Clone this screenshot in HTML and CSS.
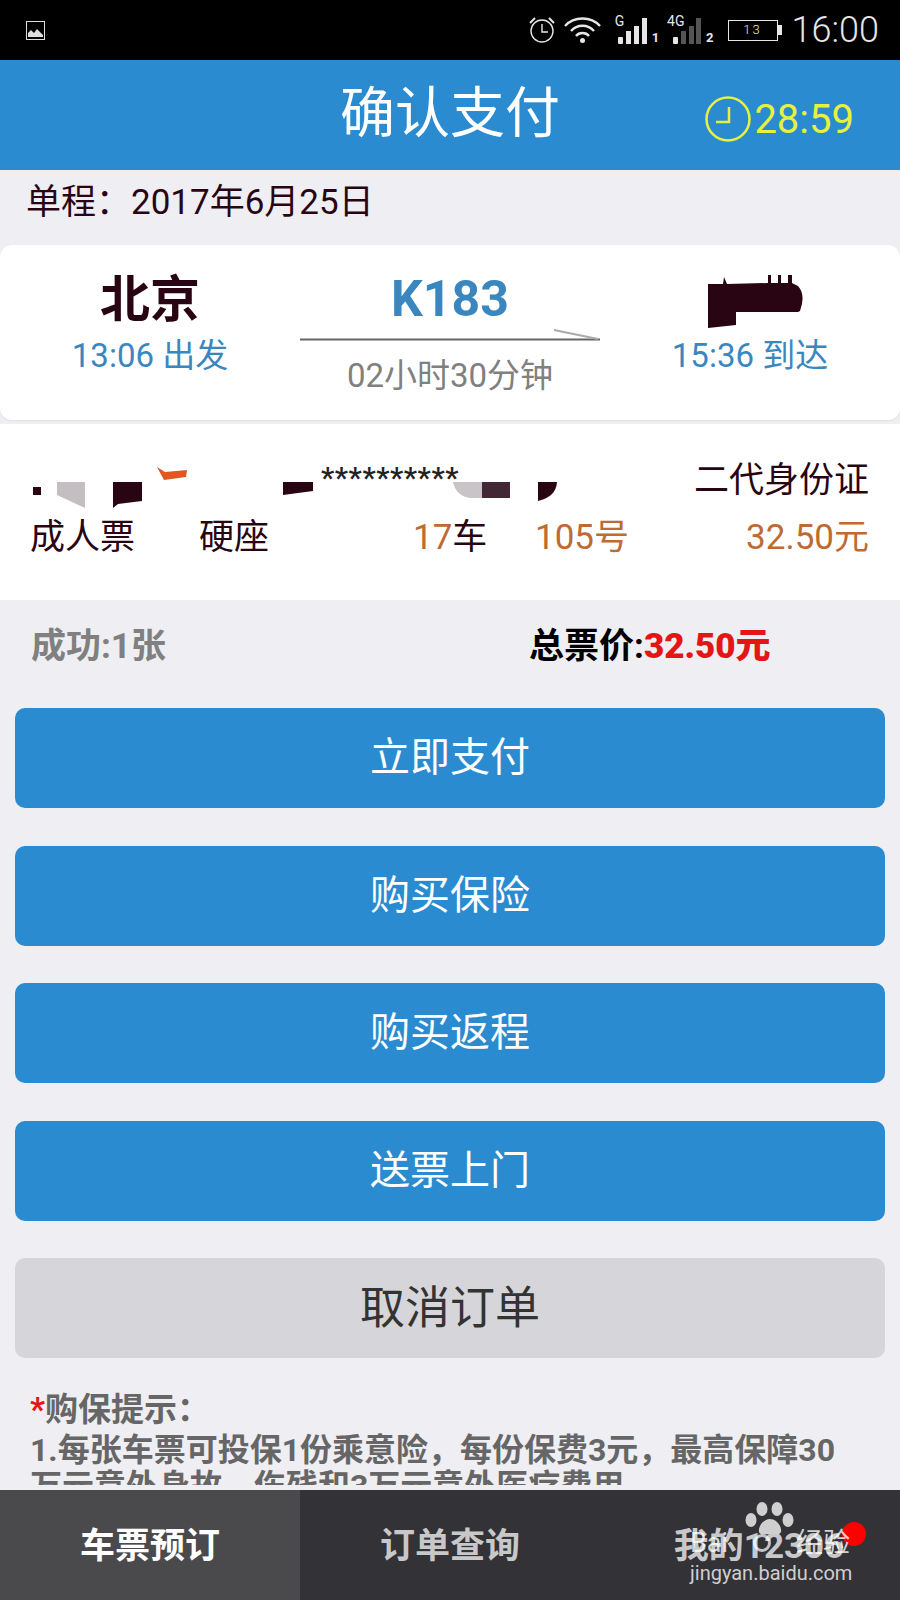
FILE: index.html
```html
<!DOCTYPE html>
<html lang="zh-CN">
<head>
    <meta charset="UTF-8">
    <meta name="viewport" content="width=device-width, initial-scale=1.0">
    <title>确认支付</title>
    <link rel="stylesheet" href="styles.css">
</head>
<body>
    <div class="statusbar">
        <svg class="pic-icon" width="19" height="19" viewBox="0 0 19 19">
            <rect x="0.5" y="0.5" width="18" height="18" fill="none" stroke="#ddd"/>
            <path d="M2 15 L2 12 L5 9 L8 12 L11 8 L17 14 L17 16 L2 16 Z" fill="#ddd"/>
        </svg>
        <div class="status-right">
            <svg width="26" height="26" viewBox="0 0 26 26" fill="none" stroke="#e6e6e6" stroke-width="1.4">
                <circle cx="13" cy="14" r="11"/>
                <path d="M13 7 V15 H19"/>
                <path d="M1 6 L6 1 M25 6 L20 1" stroke-width="2"/>
            </svg>
            <svg class="wifi" width="37" height="26" viewBox="0 0 37 26" fill="none" stroke="#e6e6e6" stroke-width="2.4">
                <path d="M1 9 C10 -1 27 -1 36 9"/>
                <path d="M7 14 C13 7 24 7 30 14"/>
                <path d="M12 19 C15 15 22 15 25 19"/>
                <circle cx="18.500" cy="23.500" r="2.500" fill="#e6e6e6" stroke="none"/>
            </svg>
            <div class="sim">
                <span class="sim-tag">G</span>
                <svg width="32" height="27" viewBox="0 0 32 27" fill="#e6e6e6">
                    <rect x="3" y="20" width="5" height="7" rx="1"/>
                    <rect x="11" y="14" width="5" height="13"/>
                    <rect x="19" y="9" width="5" height="18"/>
                    <rect x="27" y="1" width="5" height="26"/>
                </svg>
                <span class="sim-num">1</span>
            </div>
            <div class="sim sim-two">
                <span class="sim-tag">4G</span>
                <svg width="28" height="27" viewBox="0 0 28 27">
                    <rect x="0" y="20" width="5" height="7" rx="1" fill="#e6e6e6"/>
                    <rect x="8" y="14" width="5" height="13" fill="#555"/>
                    <rect x="16" y="9" width="5" height="18" fill="#555"/>
                    <rect x="23" y="1" width="5" height="26" fill="#555"/>
                </svg>
                <span class="sim-num">2</span>
            </div>
            <div class="battery">
                <span class="battery-body">13</span>
                <span class="battery-tip"></span>
            </div>
            <span class="clock-text">16:00</span>
        </div>
    </div>

    <header class="header">
        <span></span>
        <h1>确认支付</h1>
        <div class="timer">
            <svg width="46" height="46" viewBox="0 0 46 46" fill="none" stroke="#e6f13f" stroke-width="2.500">
                <circle cx="23" cy="23" r="21.500"/>
                <path d="M24 11 V26 H11"/>
            </svg>
            <span>28:59</span>
        </div>
    </header>

    <div class="trip-date">单程：2017年6月25日</div>

    <section class="train-card">
        <div class="station">
            <div class="city">北京</div>
            <div class="station-time">13:06 出发</div>
        </div>
        <div class="train-mid">
            <div class="train-no">K183</div>
            <svg class="train-line" width="300" height="12" viewBox="0 0 300 12" fill="none" stroke="#666">
                <path d="M0 10.500 H300" stroke-width="2"/>
                <path d="M254 1 L298 10" stroke="#aaa" stroke-width="2"/>
            </svg>
            <div class="train-dur">02小时30分钟</div>
        </div>
        <div class="station">
            <svg class="city-mask" width="98" height="53" viewBox="0 0 98 53">
                <path d="M0 9 L15 9 L16 2 L19 9 L60 8 L60 0 H63 V8 H70 V0 H73 V8 H80 V0 H84 V8 L90 11 Q98 20 92 36 L90 37 H28 V50 L0 53 Z" fill="#290513"/>
            </svg>
            <div class="station-time">15:36 到达</div>
        </div>
    </section>

    <section class="passenger">
        <div class="passenger-top">
            <svg class="name-mask" width="600" height="51" viewBox="0 -7 600 51">
                <text class="stars" x="321" y="21">**********</text>
                <rect x="33" y="20" width="8" height="8" fill="#290513"/>
                <path d="M57 15 H85 V41 L57 28 Z" fill="#c4bec2"/>
                <path d="M113 15 H142 V34 L118 37 L113 41 Z" fill="#290513"/>
                <path d="M157 0 L165 5 L187 3 L186 10 L164 13 Z" fill="#e2561f"/>
                <path d="M283 15 H313 V24 L283 28 Z" fill="#290513"/>
                <path d="M453 15 H482 V31 H470 Q456 29 453 15 Z" fill="#c8c4c8"/>
                <rect x="482" y="15" width="28" height="16" fill="#422835"/>
                <path d="M538 15 H557 Q556 30 538 34 Z" fill="#290513"/>
            </svg>
            <span class="id-type">二代身份证</span>
        </div>
        <div class="passenger-row">
            <span>成人票</span>
            <span>硬座</span>
            <span><em>17</em>车</span>
            <span><em>105号</em></span>
            <span class="fare">32.50元</span>
        </div>
    </section>

    <div class="summary">
        <span class="count">成功:1张</span>
        <span class="total">总票价:<b>32.50元</b></span>
    </div>

    <div class="actions">
        <button class="btn">立即支付</button>
        <button class="btn">购买保险</button>
        <button class="btn">购买返程</button>
        <button class="btn">送票上门</button>
        <button class="btn btn-cancel">取消订单</button>
    </div>

    <div class="tips">
        <div class="tips-title"><i>*</i>购保提示：</div>
        <p>1.每张车票可投保1份乘意险，每份保费3元，最高保障30万元意外身故、伤残和3万元意外医疗费用</p>
    </div>

    <nav class="tabs">
        <div class="tab active">车票预订</div>
        <div class="tab">订单查询</div>
        <div class="tab tab-mine">我的12306</div>
        <span class="dot"></span>
        <div class="watermark">
            <svg width="50" height="34" viewBox="0 0 50 34" fill="#cfcfcf">
                <ellipse cx="17" cy="7" rx="5.500" ry="7"/>
                <ellipse cx="32" cy="7" rx="5.500" ry="7"/>
                <ellipse cx="6" cy="18" rx="5.500" ry="7"/>
                <ellipse cx="43" cy="18" rx="5.500" ry="7"/>
                <path d="M25 17 C32 17 37 25 36 30 C34 34 28 32 25 32 C22 32 15 34 14 30 C13 25 18 17 25 17 Z"/>
            </svg>
            <div class="wm-line"><span>Bai</span><span class="wm-ring"></span><span>经验</span></div>
            <div class="wm-url">jingyan.baidu.com</div>
        </div>
    </nav>
</body>
</html>
```
FILE: styles.css
```css
* {
    margin: 0;
    padding: 0;
    box-sizing: border-box;
    font-family: Roboto, 'Noto Sans CJK SC', sans-serif;
}

:root {
    --blue: #2a8bd0;
    --bg: #eeeef3;
    --ink: #290513;
    --station: #3a87c0;
    --orange: #bd6a33;
}

body {
    width: 900px;
    height: 1600px;
    overflow: hidden;
    position: relative;
    background-color: var(--bg);
}

.statusbar {
    height: 60px;
    background-color: #000;
    display: flex;
    justify-content: space-between;
    align-items: center;
    padding: 0 21px 0 26px;
}

.status-right {
    display: flex;
    align-items: center;
    color: #e6e6e6;
}

.wifi {
    margin-left: 9px;
}

.sim {
    display: flex;
    align-items: flex-end;
    position: relative;
    margin-left: 14px;
    height: 28px;
}

.sim-two {
    margin-left: 8px;
}

.sim-two svg {
    margin-left: 6px;
}

.sim-tag {
    position: absolute;
    left: 0;
    top: -2px;
    font-size: 14px;
    line-height: 14px;
}

.sim-num {
    font-size: 13px;
    line-height: 13px;
    margin-left: 5px;
    font-weight: 700;
}

.battery {
    display: flex;
    align-items: center;
    margin-left: 14px;
}

.battery-body {
    width: 50px;
    height: 21px;
    border: 1.5px solid #e6e6e6;
    font-size: 13px;
    line-height: 18px;
    text-align: center;
    letter-spacing: 2px;
    font-weight: 300;
}

.battery-tip {
    width: 4px;
    height: 10px;
    background-color: #e6e6e6;
}

.clock-text {
    font-size: 36px;
    line-height: 40px;
    margin-left: 10px;
    font-weight: 300;
}

.header {
    height: 110px;
    background-color: var(--blue);
    display: grid;
    grid-template-columns: 1fr auto 1fr;
    align-items: center;
}

.header h1 {
    font-size: 55px;
    font-weight: 400;
    line-height: 96px;
    height: 100px;
    color: #fff;
}

.timer {
    justify-self: end;
    display: flex;
    align-items: center;
    gap: 3px;
    padding: 8px 46px 0 0;
    color: #e6f13f;
    font-size: 40px;
}

.trip-date {
    height: 75px;
    padding: 10px 0 0 26px;
    font-size: 35px;
    line-height: 46px;
    color: var(--ink);
}

.train-card {
    height: 175px;
    background-color: #fff;
    border-radius: 12px;
    display: grid;
    grid-template-columns: 300px 300px 300px;
    box-shadow: 0 1px 2px rgba(0, 0, 0, 0.06);
}

.station {
    text-align: center;
    padding-top: 22px;
}

.city {
    font-size: 50px;
    font-weight: 700;
    line-height: 66px;
    height: 66px;
    color: var(--ink);
}

.city-mask {
    display: block;
    margin: 8px 0 5px 108px;
}

.station-time {
    font-size: 33px;
    line-height: 46px;
    color: var(--station);
}

.train-mid {
    text-align: center;
}

.train-no {
    font-size: 50px;
    font-weight: 700;
    line-height: 56px;
    padding-top: 26px;
    color: var(--station);
}

.train-line {
    display: block;
    margin-top: 2px;
}

.train-dur {
    font-size: 33px;
    line-height: 46px;
    color: #808080;
    margin-top: 12px;
}

.passenger {
    height: 176px;
    margin-top: 4px;
    background-color: #fff;
    padding-top: 32px;
}

.passenger-top {
    display: flex;
    justify-content: space-between;
    height: 52px;
    padding-right: 31px;
}

.name-mask {
    display: block;
    margin-top: 4px;
}

.stars {
    font-size: 30px;
    font-weight: 500;
    fill: #222;
    letter-spacing: 0.5px;
}

.id-type {
    font-size: 35px;
    line-height: 46px;
    margin-top: 2px;
    color: var(--ink);
}

.passenger-row {
    display: grid;
    grid-template-columns: 169px 214px 122px auto 1fr;
    padding: 7px 31px 0 30px;
    font-size: 35px;
    line-height: 46px;
    color: var(--ink);
}

.passenger-row em {
    font-style: normal;
    color: var(--orange);
}

.fare {
    text-align: right;
    color: var(--orange);
}

.summary {
    height: 108px;
    padding: 24px 0 0 31px;
    display: grid;
    grid-template-columns: 498px auto;
    justify-content: start;
    font-size: 35px;
    line-height: 46px;
    font-weight: 700;
}

.count {
    color: #808080;
}

.total {
    color: #000;
}

.total b {
    color: #e31616;
}

.actions {
    display: flex;
    flex-direction: column;
    gap: 37.500px;
    padding: 0 15px;
}

.btn {
    height: 100px;
    padding-bottom: 8px;
    border: none;
    border-radius: 10px;
    background-color: var(--blue);
    color: #fff;
    font-size: 40px;
}

.btn-cancel {
    background-color: #d5d5da;
    color: #333;
    font-size: 45px;
}

.tips {
    height: 127px;
    overflow: hidden;
    padding: 30px 45px 0 30px;
    color: #666;
    font-weight: 700;
}

.tips-title {
    font-size: 33px;
    line-height: 44px;
}

.tips-title i {
    font-style: normal;
    color: #e31616;
}

.tips p {
    font-size: 32px;
    line-height: 36px;
}

.tabs {
    position: absolute;
    left: 0;
    bottom: 0;
    width: 900px;
    height: 110px;
    background-color: #333236;
    display: grid;
    grid-template-columns: 300px 300px 300px;
}

.tab {
    font-size: 35px;
    font-weight: 700;
    line-height: 114px;
    text-align: center;
    color: #c8c8c8;
}

.tab.active {
    background-color: #4a494c;
    color: #fff;
}

.tab-mine {
    padding-left: 18px;
    white-space: nowrap;
}

.dot {
    position: absolute;
    left: 842px;
    top: 32px;
    width: 24px;
    height: 24px;
    border-radius: 50%;
    background-color: #f00;
}

.watermark {
    position: absolute;
    left: 690px;
    top: 12px;
    width: 160px;
    text-align: center;
    color: rgba(255, 255, 255, 0.8);
}

.watermark svg {
    display: block;
    margin: 0 auto;
}

.wm-line {
    display: flex;
    justify-content: space-between;
    align-items: center;
    margin-top: -8px;
    font-size: 27px;
    line-height: 30px;
}

.wm-ring {
    width: 18px;
    height: 18px;
    border: 3px solid rgba(255, 255, 255, 0.7);
    border-radius: 50%;
}

.wm-url {
    font-size: 20px;
    line-height: 24px;
    margin-top: 3px;
    white-space: nowrap;
    color: #cfcfcf;
}
```
